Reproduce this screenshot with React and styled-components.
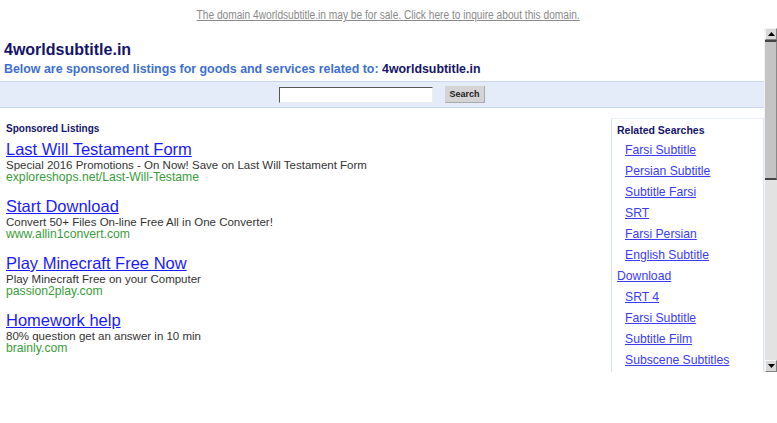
import React from "react";
import styled, { createGlobalStyle } from "styled-components";

const GlobalStyle = createGlobalStyle`
  html, body {
    margin: 0;
    padding: 0;
    background: #fff;
    font-family: "Liberation Sans", Arial, sans-serif;
  }
`;

const Page = styled.div`
  width: 777px;
  height: 423px;
  overflow: hidden;
  background: #fff;
`;

const SaleBar = styled.div`
  height: 28px;
  line-height: 28px;
  text-align: center;
`;

// the original uses a condensed face; squeeze the regular one instead
const SaleLink = styled.a`
  display: inline-block;
  transform: scaleX(0.847);
  font-family: "Liberation Sans", Arial, sans-serif;
  font-size: 12px;
  color: #8a8a8a;
  text-decoration: underline;
`;

const Frame = styled.div`
  display: flex;
  height: 344px;
`;

const Content = styled.div`
  flex: 1;
  display: flex;
  flex-direction: column;
  overflow: hidden;
`;

const SiteTitle = styled.div`
  margin: 11px 0 0 4px;
  font-size: 16px;
  line-height: 22px;
  font-weight: bold;
  color: #14146b;
`;

const Subtitle = styled.div`
  margin-left: 4px;
  font-size: 12.4px;
  line-height: 16px;
  font-weight: bold;
  color: #3d6fd0;
  & b {
    color: #14146b;
  }
`;

const SearchBand = styled.div`
  margin-top: 4px;
  height: 25px;
  background: #e5ecf9;
  border-top: 1px solid #c9d7f1;
  border-bottom: 1px solid #c9d7f1;
  display: flex;
  align-items: center;
  justify-content: center;
  gap: 12px;
`;

const SearchInput = styled.input`
  box-sizing: border-box;
  width: 154px;
  height: 16px;
  margin: 0;
  padding: 0 2px;
  border: 1px solid #eee;
  border-top-color: #555;
  border-left-color: #555;
  background: #fff;
`;

const SearchButton = styled.button`
  box-sizing: border-box;
  width: 40px;
  height: 17px;
  margin: 0;
  padding: 0;
  border: none;
  border-right: 1px solid #aaa;
  border-bottom: 1px solid #aaa;
  background: #d4d4d4;
  font-family: "Liberation Sans", Arial, sans-serif;
  font-size: 9px;
  font-weight: bold;
  color: #222;
`;

const Main = styled.div`
  flex: 1;
  display: flex;
  margin-top: 10px;
`;

const Listings = styled.div`
  flex: 1;
  padding-left: 6px;
`;

const SectionHead = styled.div`
  margin-top: 4px;
  font-size: ${({ $size }) => $size || "10px"};
  line-height: 14px;
  font-weight: bold;
  color: #14146b;
`;

const Ad = styled.div`
  margin-top: ${({ $first }) => ($first ? "3px" : "12px")};
`;

const AdTitle = styled.a`
  display: block;
  width: max-content;
  font-size: 16.5px;
  line-height: 20px;
  color: #1a1aff;
  text-decoration: underline;
`;

const AdDesc = styled.div`
  font-size: 11.5px;
  line-height: 12px;
  color: #333;
`;

const AdUrl = styled.div`
  font-size: 12.2px;
  line-height: 13px;
  color: #3a9c3a;
`;

const Related = styled.div`
  width: 146px;
  padding: 0 0 0 5px;
  border-left: 1px solid #dbe4f6;
  border-top: 1px solid #edf2fb;
  border-right: 1px solid #dbe4f6;
`;

const RelatedList = styled.div`
  margin-top: 3px;
  display: flex;
  flex-direction: column;
`;

const RelatedLink = styled.a`
  display: block;
  width: max-content;
  margin-left: ${({ $top }) => ($top ? "0" : "8px")};
  font-size: 12.2px;
  line-height: 21px;
  color: #3b3bf5;
  text-decoration: underline;
`;

const Scrollbar = styled.div`
  width: 13px;
  display: flex;
  flex-direction: column;
  background: #e2e2e2;
  border-left: 1px solid #f2f2f2;
  box-sizing: border-box;
`;

const ArrowButton = styled.div`
  height: 12px;
  background: #d8d8d8;
  border: 1px solid;
  border-color: #f4f4f4 #808080 #808080 #f4f4f4;
  box-sizing: border-box;
  display: flex;
  align-items: center;
  justify-content: center;
`;

const Thumb = styled.div`
  height: 140px;
  background: #c4c4c4;
  border-top: 2px solid #444;
  border-bottom: 2px solid #444;
  border-right: 1px solid #888;
  box-sizing: border-box;
`;

const Track = styled.div`
  flex: 1;
`;

const Arrow = ({ down }) => (
  <svg width="7" height="4" viewBox="0 0 7 4">
    <path d={down ? "M0 0 H7 L3.5 4 Z" : "M0 4 H7 L3.5 0 Z"} fill="#000" />
  </svg>
);

const ads = [
  {
    title: "Last Will Testament Form",
    desc: "Special 2016 Promotions - On Now! Save on Last Will Testament Form",
    url: "exploreshops.net/Last-Will-Testame",
  },
  {
    title: "Start Download",
    desc: "Convert 50+ Files On-line Free All in One Converter!",
    url: "www.allin1convert.com",
  },
  {
    title: "Play Minecraft Free Now",
    desc: "Play Minecraft Free on your Computer",
    url: "passion2play.com",
  },
  {
    title: "Homework help",
    desc: "80% question get an answer in 10 min",
    url: "brainly.com",
  },
];

const related = [
  { label: "Farsi Subtitle" },
  { label: "Persian Subtitle" },
  { label: "Subtitle Farsi" },
  { label: "SRT" },
  { label: "Farsi Persian" },
  { label: "English Subtitle" },
  { label: "Download", top: true },
  { label: "SRT 4" },
  { label: "Farsi Subtitle" },
  { label: "Subtitle Film" },
  { label: "Subscene Subtitles" },
];

const App = () => {
  return (
    <Page>
      <GlobalStyle />
      <SaleBar>
        <SaleLink>
          The domain 4worldsubtitle.in may be for sale. Click here to inquire about this domain.
        </SaleLink>
      </SaleBar>
      <Frame>
        <Content>
          <SiteTitle>4worldsubtitle.in</SiteTitle>
          <Subtitle>
            Below are sponsored listings for goods and services related to: <b>4worldsubtitle.in</b>
          </Subtitle>
          <SearchBand>
            <SearchInput type="text" />
            <SearchButton>Search</SearchButton>
          </SearchBand>
          <Main>
            <Listings>
              <SectionHead>Sponsored Listings</SectionHead>
              {ads.map((ad, i) => (
                <Ad key={ad.title} $first={i === 0}>
                  <AdTitle>{ad.title}</AdTitle>
                  <AdDesc>{ad.desc}</AdDesc>
                  <AdUrl>{ad.url}</AdUrl>
                </Ad>
              ))}
            </Listings>
            <Related>
              <SectionHead $size="10.5px">Related Searches</SectionHead>
              <RelatedList>
                {related.map((r, i) => (
                  <RelatedLink key={i} $top={r.top}>
                    {r.label}
                  </RelatedLink>
                ))}
              </RelatedList>
            </Related>
          </Main>
        </Content>
        <Scrollbar>
          <ArrowButton>
            <Arrow />
          </ArrowButton>
          <Thumb />
          <Track />
          <ArrowButton>
            <Arrow down />
          </ArrowButton>
        </Scrollbar>
      </Frame>
    </Page>
  );
};

export default App;
